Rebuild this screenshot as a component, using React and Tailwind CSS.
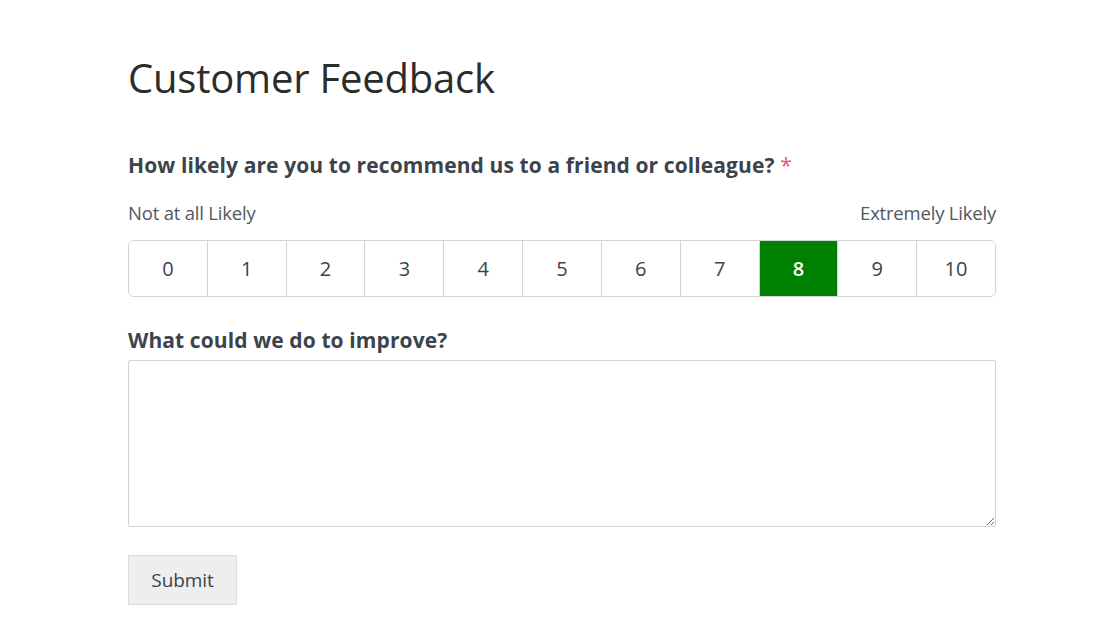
import React, { useState } from 'react';

const App = () => {
  const [score, setScore] = useState(8);
  const options = [0, 1, 2, 3, 4, 5, 6, 7, 8, 9, 10];

  return (
    <div className="min-h-screen bg-white text-[#3c434a]" style={{ fontFamily: '"Open Sans", "Noto Sans", sans-serif' }}>
      <div className="w-[868px] ml-[128px] pt-[52px]">
        <h1 className="text-[40px] leading-[52px] font-normal text-[#2c2c2c] tracking-[-0.2px]">Customer Feedback</h1>

        <form className="mt-[47px]" onSubmit={(e) => e.preventDefault()}>
          {/* NPS question */}
          <label className="block text-[21px] leading-[28px] font-bold text-[#3c434a] tracking-[0.1px]">
            How likely are you to recommend us to a friend or colleague? <span className="text-[#ee5566] font-normal">*</span>
          </label>
          <div className="flex justify-between mt-[24px] text-[18.5px] leading-[20px] text-[#50575e] tracking-[-0.2px]">
            <span>Not at all Likely</span>
            <span>Extremely Likely</span>
          </div>
          <div className="flex mt-[17px] h-[57px] border border-[#d4d4d4] rounded-[6px] overflow-hidden">
            {options.map((n, i) => (
              <button
                key={n}
                type="button"
                onClick={() => setScore(n)}
                className={`flex-1 flex items-center justify-center text-[20px] font-medium ${i > 0 ? 'border-l border-[#d4d4d4]' : ''} ${score === n ? 'bg-[#008000] text-white font-semibold' : 'bg-white text-[#3c434a]'}`}
              >
                {n}
              </button>
            ))}
          </div>

          {/* Comments */}
          <label className="block mt-[29px] text-[21px] leading-[28px] font-bold text-[#3c434a] tracking-[0.1px]">
            What could we do to improve?
          </label>
          <textarea className="block w-full h-[167px] mt-[6px] border border-[#d4d4d4] rounded-[2px] p-2 outline-none resize-y" />

          <button
            type="submit"
            className="mt-[28px] w-[109px] h-[50px] bg-[#eeeeee] border border-[#dddddd] text-[19px] text-[#3c434a] tracking-[-0.1px]"
          >
            Submit
          </button>
        </form>
      </div>
    </div>
  );
};

export default App;
